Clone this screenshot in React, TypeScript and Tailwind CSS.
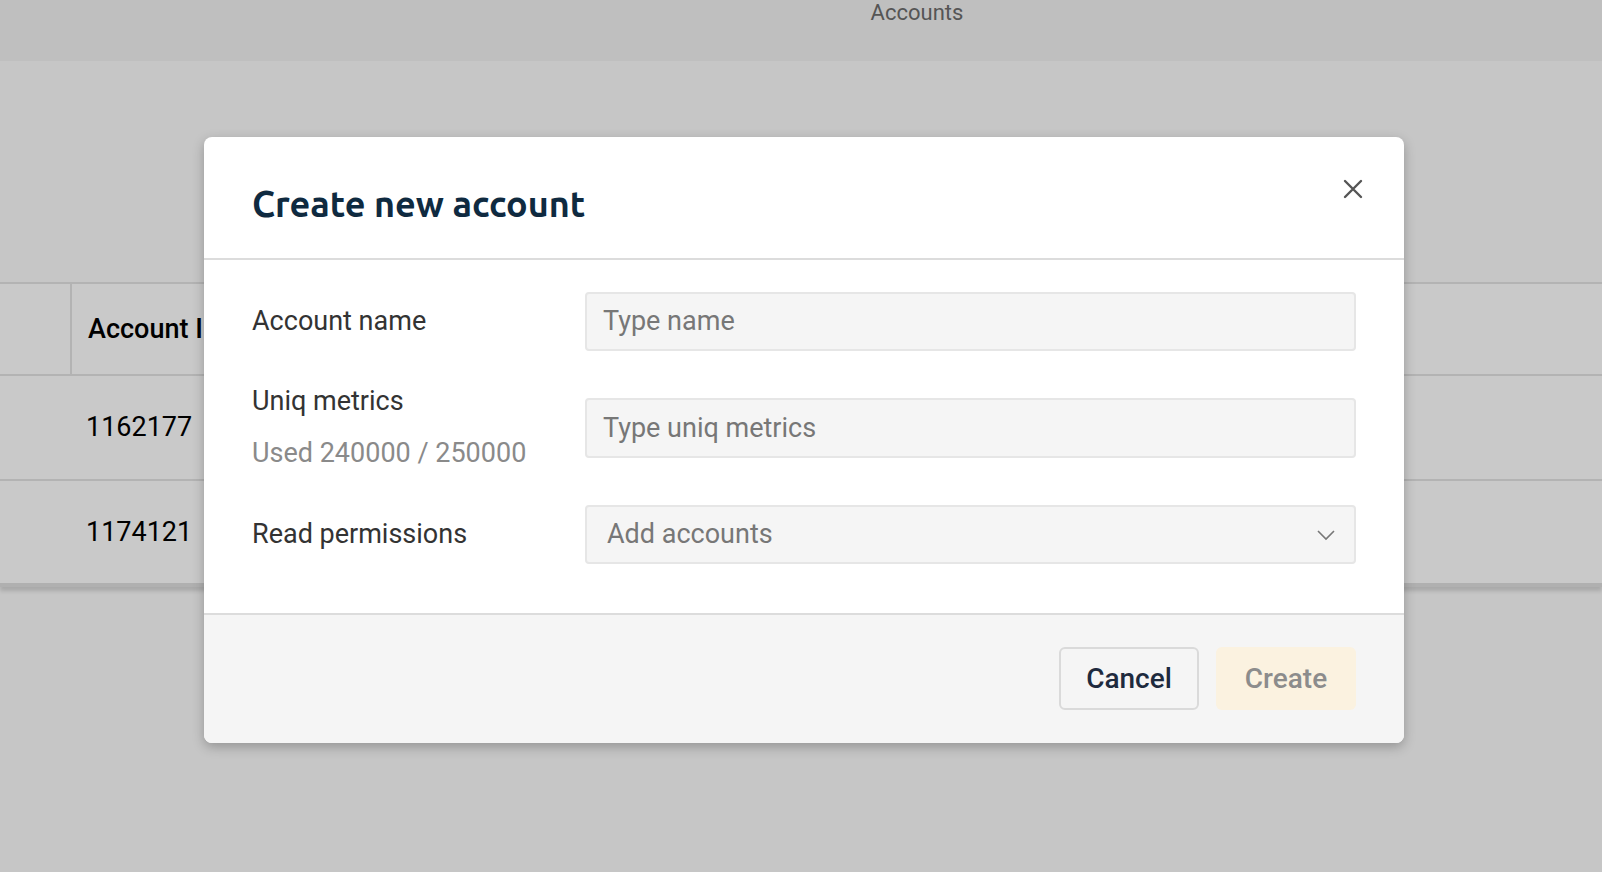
import React from "react";

export default function App() {
  return (
    <div className="relative w-[1602px] h-[872px] overflow-hidden bg-[#c6c6c6]" style={{ fontFamily: "Roboto, 'Liberation Sans', sans-serif" }}>
      <div className="h-[61px] bg-[#bfbfbf] flex justify-center">
        <span className="text-[22px] text-[#555] leading-[26px] ml-[232px]">Accounts</span>
      </div>
      <div className="mt-[221px] border-t-2 border-[#b3b3b3] bg-[#c9c9c9] shadow-[0_4px_4px_rgba(0,0,0,0.15)] border-b-4 border-b-[#b0b0b0]">
        <div className="flex h-[92px] border-b-2 border-[#b3b3b3]">
          <div className="w-[72px] border-r-2 border-[#b3b3b3]" />
          <div className="pl-[16px] flex items-center text-[27px] font-medium text-black">Account ID</div>
        </div>
        <div className="h-[105px] flex items-center pl-[86px] text-[27px] text-black border-b-2 border-[#b3b3b3]">1162177</div>
        <div className="h-[102px] flex items-center pl-[86px] text-[27px] text-black">1174121</div>
      </div>

      <div className="absolute left-[204px] top-[137px] w-[1200px] h-[606px] rounded-[8px] bg-white shadow-[0_4px_12px_rgba(0,0,0,0.25)] flex flex-col overflow-hidden">
        <div className="h-[123px] border-b-2 border-[#dcdcdc] flex items-start justify-between px-[48px] pt-[45px]">
          <h1 className="text-[36px] font-bold text-[#0f2a40] leading-[44px]" style={{ fontFamily: "Ubuntu, 'Open Sans', sans-serif" }}>Create new account</h1>
          <svg className="-mt-[4px] -mr-[8px]" width="22" height="22" viewBox="0 0 22 22" stroke="#555" strokeWidth="2.4" strokeLinecap="round"><path d="M3 3 L19 19 M19 3 L3 19" /></svg>
        </div>
        <div className="flex-1 px-[48px] pt-[32px] flex flex-col">
          <div className="flex h-[59px]">
            <div className="w-[333px] text-[27px] text-[#333] pt-[9px]">Account name</div>
            <div className="flex-1 rounded-[4px] border-2 border-[#e6e6e6] bg-[#f5f5f5] flex items-center px-[16px] text-[27px] text-[#777]">Type name</div>
          </div>
          <div className="flex mt-[47px] h-[60px]">
            <div className="w-[333px] -mt-[14px]">
              <div className="text-[27px] text-[#333] leading-[34px]">Uniq metrics</div>
              <div className="text-[27px] text-[#8a8a8a] leading-[34px] mt-[18px]">Used 240000 / 250000</div>
            </div>
            <div className="flex-1 rounded-[4px] border-2 border-[#e6e6e6] bg-[#f5f5f5] flex items-center px-[16px] text-[27px] text-[#777]">Type uniq metrics</div>
          </div>
          <div className="flex mt-[47px] h-[59px]">
            <div className="w-[333px] text-[27px] text-[#333] flex items-center">Read permissions</div>
            <div className="flex-1 rounded-[4px] border-2 border-[#e6e6e6] bg-[#f5f5f5] flex items-center justify-between pl-[20px] pr-[18px] text-[27px] text-[#777]">
              <span>Add accounts</span>
              <svg width="20" height="12" viewBox="0 0 20 12" fill="none" stroke="#777" strokeWidth="1.6"><path d="M2 2 L10 10 L18 2" /></svg>
            </div>
          </div>
        </div>
        <div className="h-[130px] border-t-2 border-[#dcdcdc] bg-[#f5f5f5] flex justify-end items-start pt-[32px] pr-[48px] gap-[17px]">
          <button className="w-[140px] h-[63px] rounded-[6px] border-2 border-[#dadada] bg-[#f5f5f5] text-[28px] font-medium text-[#1e2a3e]">Cancel</button>
          <button className="w-[140px] h-[63px] rounded-[6px] bg-[#fbf2e0] text-[28px] font-medium text-[#8c8c8c]">Create</button>
        </div>
      </div>
    </div>
  );
}
